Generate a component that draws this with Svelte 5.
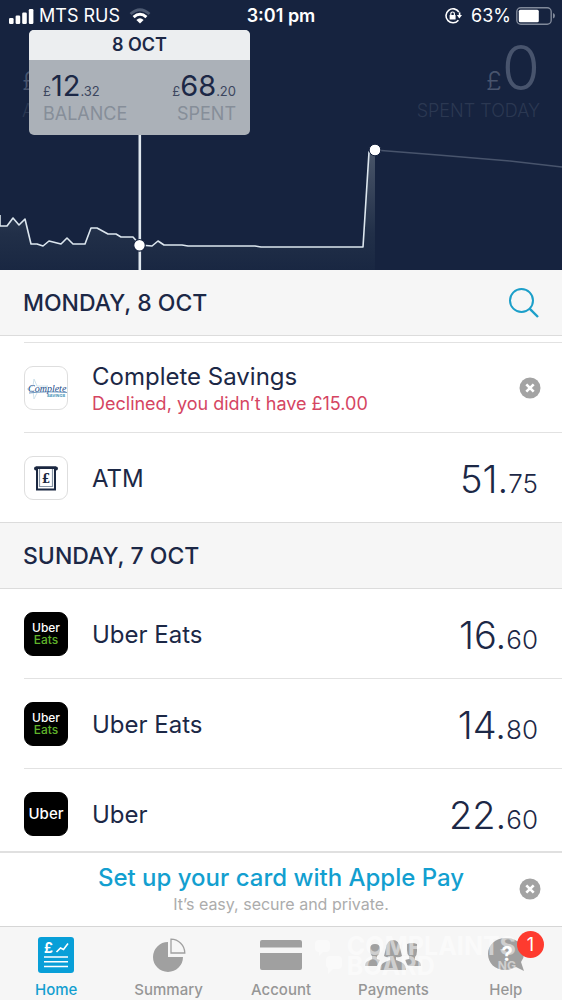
<script>
  const days = [
    {
      title: 'Monday, 8 Oct',
      search: true,
      rows: [
        { name: 'Complete Savings', note: 'Declined, you didn’t have £15.00', logo: 'savings' },
        { name: 'ATM', logo: 'atm', pounds: '51', pence: '75' },
      ],
    },
    {
      title: 'Sunday, 7 Oct',
      rows: [
        { name: 'Uber Eats', logo: 'eats', pounds: '16', pence: '60' },
        { name: 'Uber Eats', logo: 'eats', pounds: '14', pence: '80' },
        { name: 'Uber', logo: 'uber', pounds: '22', pence: '60' },
      ],
    },
  ];

  const tabs = ['Home', 'Summary', 'Account', 'Payments', 'Help'];

  let active = $state('Home');

  const line =
    '0,215 0,226 7,226 13,218 19,225 25,219 31,244 37,244 43,246 49,241 61,244 67,238 73,244 85,244 91,228 97,228 108,234 116,234 121,237 133,237 140,245 152,246 158,241 164,245 182,245 188,246 255,246 261,247 363,247 369,152 375,150';
</script>

{#snippet cross()}
  <svg width="22" height="22" viewBox="0 0 22 22" aria-hidden="true">
    <circle cx="11" cy="11" r="10.5" fill="#a3a3a3" />
    <path d="M7.3 7.3l7.4 7.4M14.7 7.3l-7.4 7.4" stroke="#fff" stroke-width="2.6" />
  </svg>
{/snippet}

<div class="page">
  <header>
    <svg class="chart" viewBox="0 0 562 270" preserveAspectRatio="none" aria-hidden="true">
      <defs>
        <linearGradient id="fill" gradientUnits="userSpaceOnUse" x1="0" y1="150" x2="0" y2="270">
          <stop offset="0" stop-color="#4a566a" />
          <stop offset="0.7" stop-color="#212f48" />
          <stop offset="1" stop-color="#192742" />
        </linearGradient>
      </defs>
      <polygon points="{line} 375,270 0,270" fill="url(#fill)" />
      <path d="M375 150L438 155L510 161L562 167" fill="none" stroke="#48546c" stroke-width="1.4" />
      <polyline points={line} fill="none" stroke="#dce6ee" stroke-width="1.6" stroke-linejoin="round" />
      <path d="M139.8 130V270" stroke="#dfe7ee" stroke-width="2.6" />
      <circle cx="139.5" cy="245.3" r="5.8" fill="#fff" stroke="#16233f" stroke-width="1.2" />
      <circle cx="375" cy="150" r="5.8" fill="#fff" stroke="#16233f" stroke-width="1" />
    </svg>

    <div class="status">
      <div class="carrier">
        <svg width="26" height="16" viewBox="0 0 26 16" fill="#fff" aria-hidden="true">
          <rect x="1" y="10" width="4.6" height="6" rx="1.2" />
          <rect x="7.6" y="7.5" width="4.6" height="8.5" rx="1.2" />
          <rect x="14.2" y="4.5" width="4.6" height="11.5" rx="1.2" />
          <rect x="20.8" y="1" width="4.6" height="15" rx="1.2" />
        </svg>
        <span>MTS RUS</span>
        <svg class="wifi" width="22" height="16" viewBox="0 0 22 16" fill="none" aria-hidden="true">
          <path d="M1.5 6Q11 -2.5 20.5 6" stroke="#4d5a72" stroke-width="2.8" />
          <path d="M4.6 9.2Q11 3.4 17.4 9.2" stroke="#fff" stroke-width="3" />
          <path d="M7.4 12Q11 8.7 14.6 12L11 15.6z" fill="#fff" />
        </svg>
      </div>
      <strong>3:01 pm</strong>
      <div class="battery">
        <svg width="18" height="18" viewBox="0 0 18 18" fill="none" stroke="#fff" aria-hidden="true">
          <path d="M14.9 5A7 7 0 1 0 14.4 13.2" stroke-width="1.6" />
          <path d="M15.6 5.4V9" stroke-width="1.6" />
          <path d="M12.8 8h5.2l-2.6 3.6z" fill="#fff" stroke="none" />
          <rect x="5.6" y="8" width="6" height="4.6" rx="0.6" fill="#fff" stroke="none" />
          <path d="M6.8 8.4V6.8a1.8 1.8 0 0 1 3.6 0V8.4" stroke-width="1.2" />
        </svg>
        <span>63%</span>
        <svg width="40" height="18" viewBox="0 0 40 18" aria-hidden="true">
          <rect x="0.8" y="0.8" width="34.4" height="16.4" rx="4" fill="none" stroke="#80899a" stroke-width="1.4" />
          <rect x="2.8" y="2.8" width="20" height="12.4" rx="1.5" fill="#fff" />
          <path d="M37 6v5.6q2-0.6 2-2.8t-2-2.8z" fill="#80899a" />
        </svg>
      </div>
    </div>

    <div class="totals">
      <div>
        <div class="big"><small>£</small></div>
        <div class="caption">A</div>
      </div>
      <div class="right">
        <div class="big"><small>£</small>0</div>
        <div class="caption">Spent today</div>
      </div>
    </div>

    <div class="tooltip">
      <div class="date">8 Oct</div>
      <div class="figures">
        <div>
          <div class="figure"><small>£</small>12<small>.32</small></div>
          <div class="label">Balance</div>
        </div>
        <div class="right">
          <div class="figure"><small>£</small>68<small>.20</small></div>
          <div class="label">Spent</div>
        </div>
      </div>
    </div>
  </header>

  <main>
    {#each days as day}
      <section>
        <div class="day">
          <h2>{day.title}</h2>
          {#if day.search}
            <button class="plain" aria-label="Search">
              <svg width="32" height="32" viewBox="0 0 32 32" fill="none" stroke="#1c9fc9" stroke-width="2" aria-hidden="true">
                <circle cx="13.5" cy="13.5" r="11.5" />
                <path d="M21.6 21.6L30 30" stroke-width="2.4" />
              </svg>
            </button>
          {/if}
        </div>
        <ul class:scrolled={day.search}>
          {#each day.rows as row}
            <li>
              <div class="logo {row.logo}">
                {#if row.logo === 'savings'}
                  <svg width="42" height="42" viewBox="0 0 42 42" aria-hidden="true">
                    <path d="M9 12l3 7 11 0-10 5-4 8-1-8-6-2 6-3z" fill="none" stroke="#cfe3ec" />
                    <text x="3" y="25" class="script">Complete</text>
                    <path d="M4 26Q20 24 42 25.5" fill="none" stroke="#4c7fae" stroke-width="0.8" />
                    <text x="22" y="30" class="tiny">SAVINGS</text>
                  </svg>
                {:else if row.logo === 'atm'}
                  <svg width="42" height="42" viewBox="0 0 42 42" aria-hidden="true">
                    <path d="M11 11.5h20" stroke="#1a2740" stroke-width="4" stroke-linecap="round" />
                    <path d="M12 11h18v21.5H12z" fill="#fff" stroke="#1a2740" stroke-width="2" />
                    <path d="M11 10.5h20" stroke="#1a2740" stroke-width="2" />
                    <path d="M14.5 12v17.5h13V12" fill="none" stroke="#8795a5" stroke-width="1.2" />
                    <text x="21" y="26" text-anchor="middle" class="pound">£</text>
                  </svg>
                {:else}
                  <span>Uber</span>
                  {#if row.logo === 'eats'}<span class="green">Eats</span>{/if}
                {/if}
              </div>
              <div class="info">
                <div class="name">{row.name}</div>
                {#if row.note}<div class="note">{row.note}</div>{/if}
              </div>
              {#if row.pounds}
                <div class="amount">{row.pounds}.<small>{row.pence}</small></div>
              {:else}
                <button class="plain" aria-label="Dismiss">{@render cross()}</button>
              {/if}
            </li>
          {/each}
        </ul>
      </section>
    {/each}
  </main>

  <aside>
    <div class="promo">
      <a href="#apple-pay">Set up your card with Apple Pay</a>
      <p>It’s easy, secure and private.</p>
    </div>
    <button class="plain" aria-label="Close">{@render cross()}</button>
  </aside>

  <nav>
    {#each tabs as tab}
      <button class="tab" class:active={active === tab} onclick={() => (active = tab)}>
        <span class="icon">
          {#if tab === 'Home'}
            <svg width="36" height="36" viewBox="0 0 36 36" aria-hidden="true">
              <rect width="36" height="36" rx="3" fill="#089fd8" />
              <text x="6" y="16" class="home-pound">£</text>
              <path d="M18.5 15l4-4 3 1.5 4.5-6M6 20h24M6 24.8h24M6 29.5h24" fill="none" stroke="#fff" stroke-width="1.6" />
            </svg>
          {:else if tab === 'Summary'}
            <svg width="36" height="36" viewBox="0 0 36 36" aria-hidden="true">
              <path d="M17 5A15 15 0 1 0 32 20H17z" fill="#a0a0a0" />
              <path d="M20 2.2A14 14 0 0 1 33.8 16H20z" fill="none" stroke="#a0a0a0" stroke-width="1.3" />
            </svg>
          {:else if tab === 'Account'}
            <svg width="42" height="36" viewBox="0 0 42 36" fill="#a0a0a0" aria-hidden="true">
              <path d="M2 3h38q2 0 2 2v5.5H0V5q0-2 2-2zM0 16h42v15q0 2-2 2H2q-2 0-2-2z" />
            </svg>
          {:else if tab === 'Payments'}
            <svg width="56" height="36" viewBox="0 0 56 36" fill="#a0a0a0" aria-hidden="true">
              <path d="M5 12q0-5 5-5t5 5q0 5-3 7v3l3 1-3 6H0q0-4 3-5l4-2v-3q-2-2-2-7z" />
              <path d="M42 7q5-2 10 0v7q0 4-2 6v3l3 1q3 1 3 5H43l-3-6 4-1v-3q-2-2-2-6z" />
              <path d="M28 3q6 0 7 8l2 8q-3 2-6 1v3l5 2q5 2 5 8H15q0-6 5-8l5-2v-3q-3 1-6-1l2-8q1-8 7-8z" />
            </svg>
          {:else}
            <svg width="38" height="36" viewBox="0 0 38 36" aria-hidden="true">
              <path d="M19 1C8 1 1 8 1 17s7 16 17 16q7 0 11-3l8 4-3-9q3-4 3-8C37 8 30 1 19 1z" fill="#a0a0a0" />
              <text x="20" y="24" text-anchor="middle" class="question">?</text>
            </svg>
            <span class="badge">1</span>
          {/if}
        </span>
        {tab}
      </button>
    {/each}
    <div class="watermark">
      <svg width="34" height="40" viewBox="0 0 34 40" fill="#fff" aria-hidden="true">
        <path d="M2 8q0-4 4-4h7q4 0 4 4v4q0 4-4 4h-3l-4 4v-4q-4 0-4-4z" />
        <path d="M13 24q0-4 4-4h8q4 0 4 4v5q0 4-4 4h-5l-5 5v-6q-2-1-2-3z" />
      </svg>
      <div class="mark-words">
        <span>COMPLAINTS</span>
        <span class="second">BOARD <small>NG</small></span>
      </div>
    </div>
  </nav>
</div>

<style>
  :global(body) {
    margin: 0;
  }

  .page {
    display: flex;
    flex-direction: column;
    height: 100vh;
    overflow: hidden;
    background: #fff;
    color: #1c2846;
    font-family: Inter, "Liberation Sans", sans-serif;
  }

  h2,
  p,
  ul {
    margin: 0;
    padding: 0;
  }

  small {
    line-height: 1;
  }

  button {
    border: 0;
    padding: 0;
    background: none;
    font: inherit;
    cursor: pointer;
  }

  .plain svg {
    display: block;
  }

  .right {
    text-align: right;
  }

  header {
    position: relative;
    flex: none;
    height: 270px;
    background: #16233f;
    color: #fff;
  }

  .chart {
    position: absolute;
    inset: 0;
    width: 100%;
    height: 100%;
  }

  .status {
    position: relative;
    display: grid;
    grid-template-columns: 1fr auto 1fr;
    align-items: center;
    height: 31px;
    padding: 0 8px;
    font-size: 18px;
  }

  .status strong {
    font-weight: 600;
  }

  .carrier,
  .battery {
    display: flex;
    align-items: center;
    gap: 5px;
  }

  .battery {
    justify-content: flex-end;
    margin-right: -2px;
  }

  .battery span {
    margin-left: 4px;
  }

  .wifi {
    margin-left: 4px;
  }

  .totals {
    display: flex;
    justify-content: space-between;
    padding: 4px 22px;
  }

  .big {
    color: #48546d;
    font-size: 62px;
    font-weight: 300;
    line-height: 66px;
  }

  .big small {
    font-size: 26px;
  }

  .caption {
    color: #2b3852;
    font-size: 18px;
    font-weight: 300;
    line-height: 20px;
    text-transform: uppercase;
  }

  .tooltip {
    position: absolute;
    top: 30px;
    left: 29px;
    width: 221px;
    border-radius: 5px;
    overflow: hidden;
    background: #abb1b8;
    color: #1c2846;
  }

  .date {
    background: #eceef0;
    font-size: 18px;
    font-weight: 600;
    line-height: 30px;
    text-align: center;
    text-transform: uppercase;
  }

  .figures {
    display: flex;
    justify-content: space-between;
    height: 61px;
    padding: 7px 14px;
  }

  .figure {
    font-size: 29px;
    line-height: 37px;
  }

  .figure small {
    color: #3c465e;
    font-size: 13px;
  }

  .label {
    color: #868e99;
    font-size: 18px;
    line-height: 20px;
    text-transform: uppercase;
  }

  main {
    flex: 1;
    min-height: 0;
    overflow: hidden;
  }

  .day {
    display: flex;
    align-items: center;
    justify-content: space-between;
    height: 65px;
    padding: 0 22px 0 23px;
    border-bottom: 1px solid #dcdcdc;
    background: #f6f6f6;
  }

  h2 {
    font-size: 23px;
    font-weight: 500;
    text-transform: uppercase;
  }

  ul {
    list-style: none;
  }

  .scrolled {
    padding-top: 6px;
    border-bottom: 1px solid #dcdcdc;
  }

  li {
    display: flex;
    align-items: center;
    height: 89px;
    margin-left: 24px;
    padding-right: 24px;
    border-top: 1px solid #e2e2e2;
  }

  section:last-child li:first-child {
    border-top: 0;
  }

  li .plain {
    margin-right: -3px;
  }

  .logo {
    display: flex;
    flex: none;
    flex-direction: column;
    align-items: center;
    justify-content: center;
    box-sizing: border-box;
    width: 44px;
    height: 44px;
    border: 1px solid #dedede;
    border-radius: 9px;
    color: #fff;
    font-size: 12px;
    font-weight: 500;
    line-height: 12px;
  }

  .eats,
  .uber {
    border-color: #000;
    background: #000;
  }

  .uber {
    font-size: 15px;
  }

  .green {
    color: #5fb32a;
  }

  .script {
    fill: #1f4f8c;
    font-family: "Liberation Serif", serif;
    font-size: 10px;
    font-style: italic;
  }

  .tiny {
    fill: #3f93b8;
    font-size: 4px;
    font-weight: 700;
  }

  .pound {
    fill: #1a2740;
    font-family: "DejaVu Serif", serif;
    font-size: 12px;
    font-weight: 700;
  }

  .info {
    flex: 1;
    padding: 3px 0 0 24px;
  }

  .name {
    font-size: 24px;
    line-height: 30px;
  }

  .note {
    color: #d54562;
    font-size: 18px;
    line-height: 24px;
  }

  .amount {
    padding-top: 2px;
    font-size: 38px;
    font-weight: 300;
  }

  .amount small {
    font-size: 26px;
  }

  aside {
    display: flex;
    flex: none;
    align-items: center;
    box-sizing: border-box;
    height: 75px;
    padding-right: 21px;
    padding-bottom: 2px;
    border-top: 2px solid #e0e0e0;
    background: #fff;
  }

  .promo {
    flex: 1;
    padding-left: 43px;
    text-align: center;
  }

  .promo a {
    color: #139fd0;
    font-size: 24px;
    font-weight: 500;
    line-height: 30px;
    text-decoration: none;
  }

  .promo p {
    color: #acacac;
    font-size: 16px;
    line-height: 22px;
  }

  nav {
    position: relative;
    display: flex;
    flex: none;
    height: 74px;
    box-sizing: border-box;
    border-top: 1px solid #d6d6d6;
    background: #f6f6f6;
  }

  .tab {
    display: flex;
    flex: 1;
    flex-direction: column;
    align-items: center;
    padding-top: 10px;
    color: #969696;
    font-size: 15px;
    font-weight: 500;
    line-height: 18px;
  }

  .active {
    color: #139fd0;
  }

  .icon {
    position: relative;
    height: 44px;
  }

  .icon svg {
    display: block;
  }

  .home-pound {
    fill: #fff;
    font-size: 14px;
    font-weight: 700;
  }

  .question {
    fill: #fff;
    font-size: 20px;
    font-weight: 700;
  }

  .badge {
    position: absolute;
    z-index: 1;
    top: -6px;
    left: 30px;
    width: 27px;
    border-radius: 50%;
    background: #fe3b2f;
    color: #fff;
    font-size: 18px;
    font-weight: 400;
    line-height: 27px;
    text-align: center;
  }

  .watermark {
    position: absolute;
    top: 9px;
    right: 46px;
    display: flex;
    color: #fff;
    opacity: 0.5;
    pointer-events: none;
  }

  .mark-words {
    display: flex;
    flex-direction: column;
    font-size: 25px;
    font-weight: 700;
    line-height: 20px;
  }

  .second {
    display: flex;
    align-items: center;
    justify-content: space-between;
  }

  .second small {
    font-size: 12px;
  }
</style>
